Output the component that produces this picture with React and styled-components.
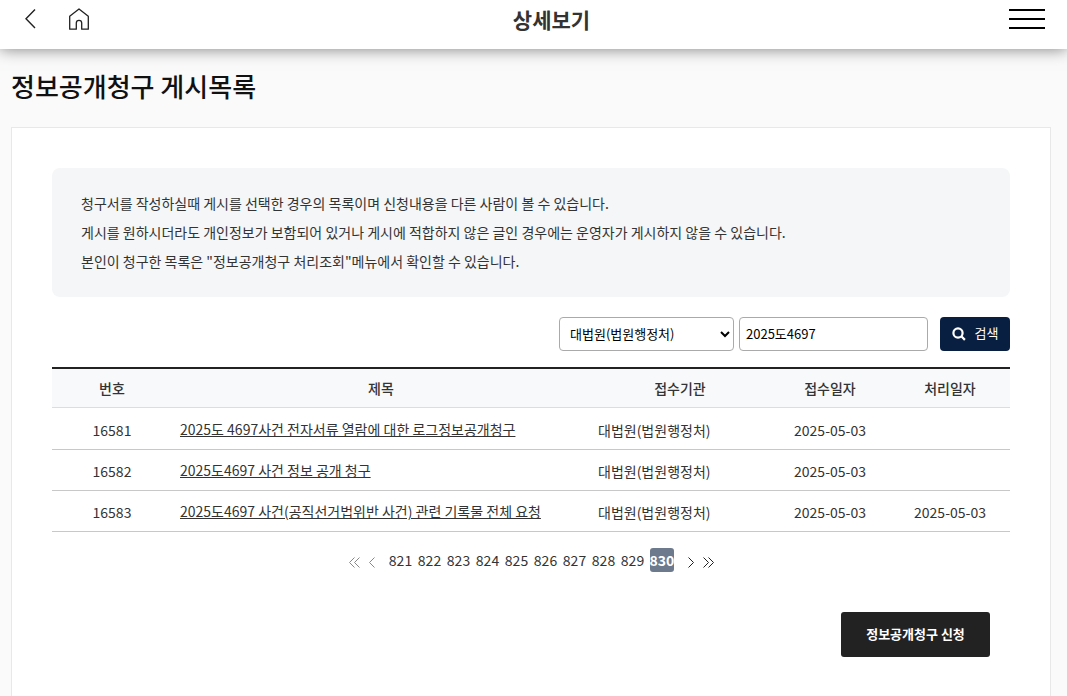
import React from "react";
import styled, { createGlobalStyle } from "styled-components";

const GlobalStyle = createGlobalStyle`
  *, *::before, *::after { box-sizing: border-box; }
  body {
    margin: 0;
    background: #fafafa;
    color: #333;
    font-family: "Noto Sans CJK KR", "Noto Sans", sans-serif;
    font-size: 14px;
    line-height: 20px;
  }
  button, input, select { font-family: inherit; }
`;

const Page = styled.div`
  display: flex;
  flex-direction: column;
  min-height: 100vh;
`;

const TopBar = styled.header`
  display: grid;
  grid-template-columns: 1fr auto 1fr;
  align-items: center;
  height: 49px;
  padding: 0 22px 12px 24px;
  background: #fff;
  box-shadow: 0 0 15px rgba(0, 0, 0, 0.5);
`;

const TopTools = styled.div`
  display: flex;
  gap: 32px;
`;

const IconButton = styled.button`
  display: flex;
  justify-self: end;
  padding: 0;
  border: 0;
  background: none;
  color: #222;
  cursor: pointer;
`;

const BarTitle = styled.h1`
  margin: 0;
  padding-left: 34px;
  font-size: 21px;
  line-height: 30px;
  font-weight: 700;
`;

const Main = styled.main`
  display: flex;
  flex-direction: column;
  flex: 1;
  padding: 17px 16px 0 11px;
`;

const PageTitle = styled.h2`
  margin: 0 0 21px;
  color: #111;
  font-size: 26px;
  line-height: 40px;
  font-weight: 500;
`;

const Card = styled.section`
  flex: 1;
  padding: 40px 40px 39px;
  border: 1px solid #e8e8e8;
  border-bottom: 0;
  background: #fff;
`;

const Notice = styled.div`
  padding: 21px 29px;
  border-radius: 8px;
  background: #f4f6f8;
  line-height: 29px;
`;

const NoticeLine = styled.p`
  margin: 0;
`;

const SearchForm = styled.form`
  display: flex;
  justify-content: flex-end;
  margin: 20px 0 16px;
`;

const CourtSelect = styled.select`
  width: 175px;
  height: 34px;
  margin-right: 5px;
  padding: 0 0 2px 6px;
  border: 1px solid #aaa;
  border-radius: 4px;
  background: #fff;
  color: #000;
  font-size: 13px;
`;

const KeywordInput = styled.input`
  width: 189px;
  height: 34px;
  margin-right: 12px;
  padding: 0 6px 2px;
  border: 1px solid #aaa;
  border-radius: 4px;
  background: #fff;
  color: #000;
  font-size: 13px;
`;

const SearchButton = styled.button`
  display: flex;
  align-items: center;
  justify-content: center;
  gap: 9px;
  width: 70px;
  height: 34px;
  padding: 0;
  border: 0;
  border-radius: 4px;
  background: #081f42;
  color: #fff;
  font-size: 13px;
  line-height: 20px;
  cursor: pointer;
`;

const ButtonLabel = styled.span`
  padding-bottom: 2px;
`;

const Table = styled.table`
  width: 100%;
  border-collapse: separate;
  border-spacing: 0;
  border-top: 2px solid #222;
  table-layout: fixed;
`;

const Column = styled.col`
  width: ${(p) => p.$width};
`;

const HeadCell = styled.th`
  height: 39px;
  padding: 0 8px;
  border-bottom: 1px solid #ddd;
  background: #f8f9fb;
  font-weight: 500;
  text-align: center;
`;

const Cell = styled.td`
  height: 41px;
  padding: 2px 8px 0;
  border-bottom: 1px solid #c8c8c8;
  text-align: center;

  tr:first-child > & {
    height: 42px;
  }
`;

const OrgCell = styled(Cell)`
  text-align: left;
`;

const TitleCell = styled(Cell)`
  padding-top: 0;
  text-align: left;
`;

const TitleLink = styled.a`
  color: #333;
  text-decoration: underline;
`;

const Pagination = styled.nav`
  display: flex;
  align-items: center;
  justify-content: center;
  gap: 5px;
  margin-top: 16px;
`;

const PageLink = styled.a`
  width: 24px;
  border-radius: 3px;
  background: ${(p) => (p.$current ? "#6d798c" : "transparent")};
  color: ${(p) => (p.$current ? "#fff" : "#333")};
  font-weight: ${(p) => (p.$current ? 700 : 400)};
  line-height: 24px;
  text-align: center;
  text-decoration: none;
`;

const PageSteps = styled.div`
  display: flex;
  gap: 9px;
  padding: ${(p) => (p.$end ? "4px 0 0 9px" : "4px 9px 0 0")};
`;

const StepLink = styled.a`
  display: flex;
  color: ${(p) => (p.$muted ? "#888" : "#222")};
`;

const Actions = styled.div`
  display: flex;
  justify-content: flex-end;
  margin-top: 40px;
  padding-right: 20px;
`;

const ApplyButton = styled.button`
  width: 149px;
  height: 45px;
  padding: 0 0 2px;
  border: 0;
  border-radius: 3px;
  background: #222;
  color: #fff;
  font-size: 13px;
  font-weight: 700;
  cursor: pointer;
`;

const Arrow = ({ double, flip }) => (
  <svg width={double ? 11 : 6} height="11" fill="none" stroke="currentColor" aria-hidden="true">
    <g transform={flip ? `translate(${double ? 11 : 6} 0) scale(-1 1)` : undefined}>
      <path d="M.5.5l5 5-5 5" />
      {double && <path d="M5.5.5l5 5-5 5" />}
    </g>
  </svg>
);

const notices = [
  "청구서를 작성하실때 게시를 선택한 경우의 목록이며 신청내용을 다른 사람이 볼 수 있습니다.",
  "게시를 원하시더라도 개인정보가 보함되어 있거나 게시에 적합하지 않은 글인 경우에는 운영자가 게시하지 않을 수 있습니다.",
  '본인이 청구한 목록은 "정보공개청구 처리조회"메뉴에서 확인할 수 있습니다.',
];

const rows = [
  { no: 16581, title: "2025도 4697사건 전자서류 열람에 대한 로그정보공개청구", org: "대법원(법원행정처)", received: "2025-05-03", done: "" },
  { no: 16582, title: "2025도4697 사건 정보 공개 청구", org: "대법원(법원행정처)", received: "2025-05-03", done: "" },
  { no: 16583, title: "2025도4697 사건(공직선거법위반 사건) 관련 기록물 전체 요청", org: "대법원(법원행정처)", received: "2025-05-03", done: "2025-05-03" },
];

const pages = [821, 822, 823, 824, 825, 826, 827, 828, 829, 830];

export default function App() {
  return (
    <Page>
      <GlobalStyle />
      <TopBar>
        <TopTools>
          <IconButton type="button" aria-label="뒤로">
            <svg width="12" height="22" fill="none" stroke="currentColor" strokeWidth="1.4">
              <path d="M11 1.5L2 10.7l9 9.3" />
            </svg>
          </IconButton>
          <IconButton type="button" aria-label="홈">
            <svg width="22" height="22" fill="none" stroke="currentColor" strokeWidth="1.3" strokeLinejoin="round">
              <path d="M1.7 8.2L11 .9l9.3 7.3v13h-6.6v-6.1a2.7 2.7 0 0 0-5.4 0v6.1H1.7z" />
            </svg>
          </IconButton>
        </TopTools>
        <BarTitle>상세보기</BarTitle>
        <IconButton type="button" aria-label="전체 메뉴">
          <svg width="36" height="20" fill="#000">
            <path d="M0 0h36v2H0zM0 9h36v2H0zM0 18h36v2H0z" />
          </svg>
        </IconButton>
      </TopBar>
      <Main>
        <PageTitle>정보공개청구 게시목록</PageTitle>
        <Card>
          <Notice>
            {notices.map((line) => (
              <NoticeLine key={line}>{line}</NoticeLine>
            ))}
          </Notice>
          <SearchForm onSubmit={(e) => e.preventDefault()}>
            <CourtSelect aria-label="접수기관" defaultValue="court">
              <option value="court">대법원(법원행정처)</option>
            </CourtSelect>
            <KeywordInput type="text" aria-label="검색어" defaultValue="2025도4697" />
            <SearchButton type="submit">
              <svg width="14" height="14" fill="none" stroke="currentColor" strokeWidth="2.2" aria-hidden="true">
                <circle cx="6" cy="6" r="4.6" />
                <path d="M9.3 9.3l3.6 3.6" />
              </svg>
              <ButtonLabel>검색</ButtonLabel>
            </SearchButton>
          </SearchForm>
          <Table>
            <colgroup>
              <Column $width="120px" />
              <Column $width="auto" />
              <Column $width="180px" />
              <Column $width="120px" />
              <Column $width="120px" />
            </colgroup>
            <thead>
              <tr>
                {["번호", "제목", "접수기관", "접수일자", "처리일자"].map((label) => (
                  <HeadCell key={label} scope="col">{label}</HeadCell>
                ))}
              </tr>
            </thead>
            <tbody>
              {rows.map((row) => (
                <tr key={row.no}>
                  <Cell>{row.no}</Cell>
                  <TitleCell><TitleLink href="#">{row.title}</TitleLink></TitleCell>
                  <OrgCell>{row.org}</OrgCell>
                  <Cell>{row.received}</Cell>
                  <Cell>{row.done}</Cell>
                </tr>
              ))}
            </tbody>
          </Table>
          <Pagination aria-label="페이지">
            <PageSteps>
              <StepLink href="#" $muted aria-label="처음"><Arrow double flip /></StepLink>
              <StepLink href="#" $muted aria-label="이전"><Arrow flip /></StepLink>
            </PageSteps>
            {pages.map((n) => (
              <PageLink key={n} href="#" $current={n === 830} aria-current={n === 830 ? "page" : undefined}>{n}</PageLink>
            ))}
            <PageSteps $end>
              <StepLink href="#" aria-label="다음"><Arrow /></StepLink>
              <StepLink href="#" aria-label="마지막"><Arrow double /></StepLink>
            </PageSteps>
          </Pagination>
          <Actions>
            <ApplyButton type="button">정보공개청구 신청</ApplyButton>
          </Actions>
        </Card>
      </Main>
    </Page>
  );
}
